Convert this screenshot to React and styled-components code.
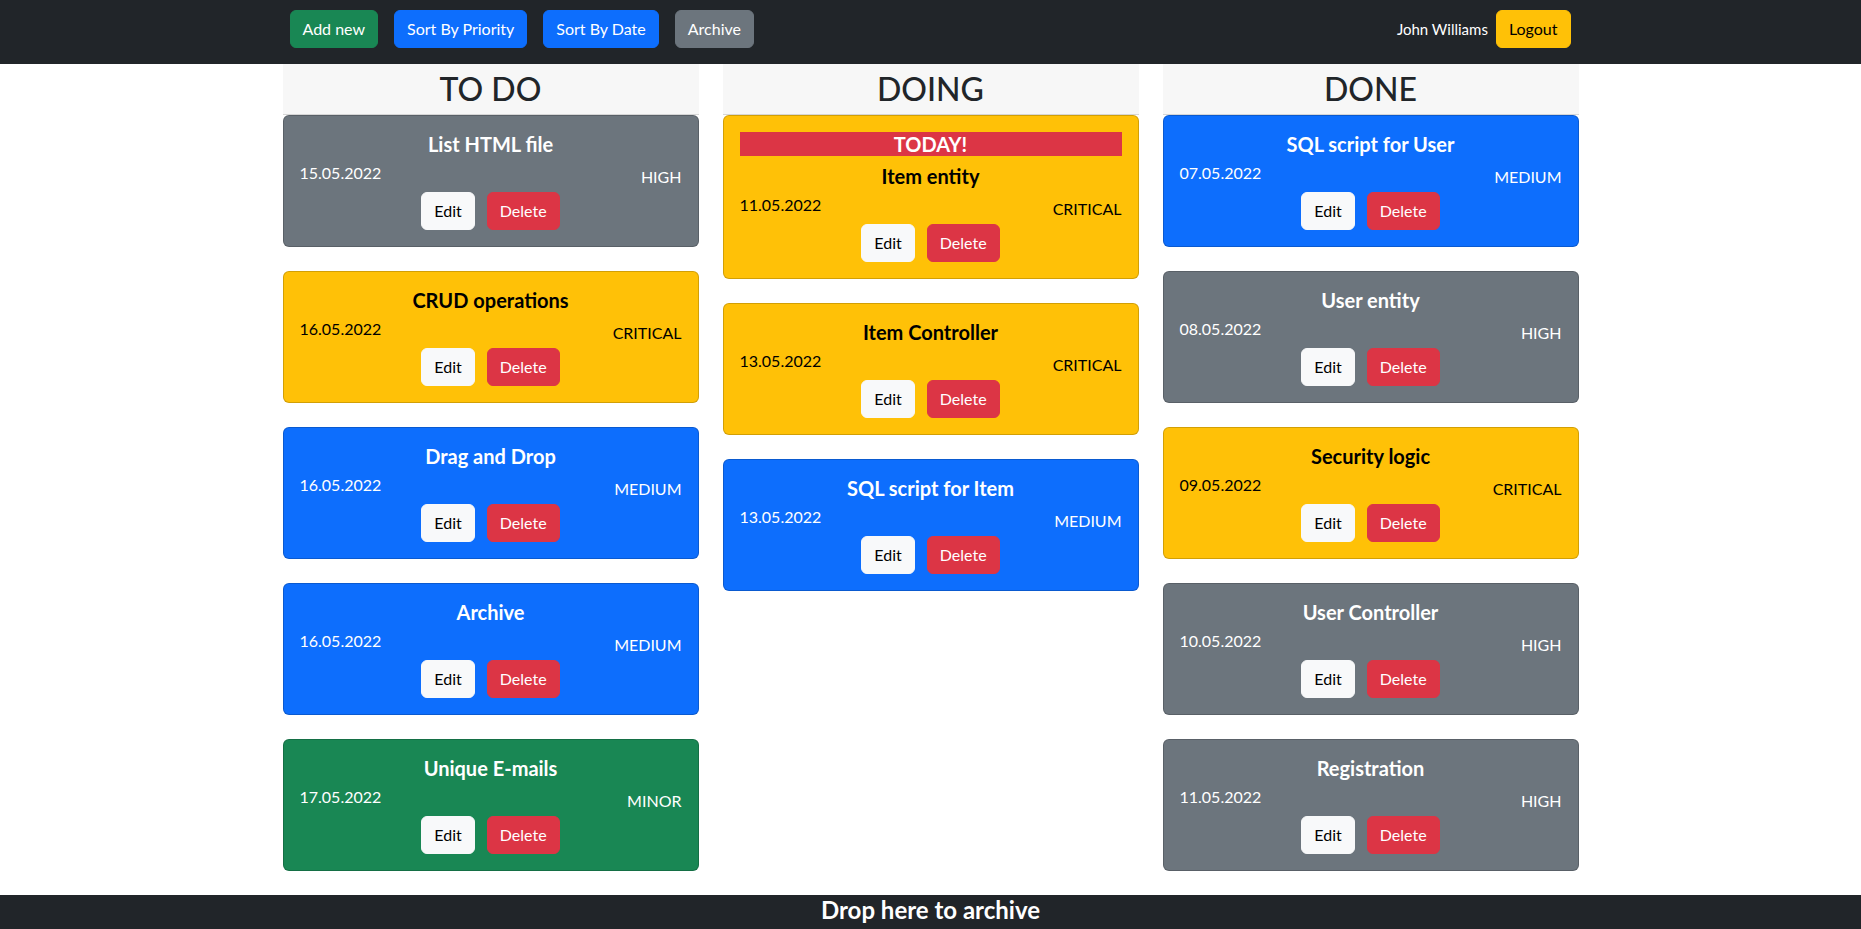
import React from 'react';
import styled, { createGlobalStyle } from 'styled-components';

const colors = {
  primary: '#0d6efd',
  secondary: '#6c757d',
  success: '#198754',
  warning: '#ffc107',
  danger: '#dc3545',
  light: '#f8f9fa',
  dark: '#212529',
};

const columns = [
  {
    title: 'TO DO',
    items: [
      { name: 'List HTML file', date: '15.05.2022', priority: 'HIGH', tone: 'secondary' },
      { name: 'CRUD operations', date: '16.05.2022', priority: 'CRITICAL', tone: 'warning' },
      { name: 'Drag and Drop', date: '16.05.2022', priority: 'MEDIUM', tone: 'primary' },
      { name: 'Archive', date: '16.05.2022', priority: 'MEDIUM', tone: 'primary' },
      { name: 'Unique E-mails', date: '17.05.2022', priority: 'MINOR', tone: 'success' },
    ],
  },
  {
    title: 'DOING',
    items: [
      { name: 'Item entity', date: '11.05.2022', priority: 'CRITICAL', tone: 'warning', today: true },
      { name: 'Item Controller', date: '13.05.2022', priority: 'CRITICAL', tone: 'warning' },
      { name: 'SQL script for Item', date: '13.05.2022', priority: 'MEDIUM', tone: 'primary' },
    ],
  },
  {
    title: 'DONE',
    items: [
      { name: 'SQL script for User', date: '07.05.2022', priority: 'MEDIUM', tone: 'primary' },
      { name: 'User entity', date: '08.05.2022', priority: 'HIGH', tone: 'secondary' },
      { name: 'Security logic', date: '09.05.2022', priority: 'CRITICAL', tone: 'warning' },
      { name: 'User Controller', date: '10.05.2022', priority: 'HIGH', tone: 'secondary' },
      { name: 'Registration', date: '11.05.2022', priority: 'HIGH', tone: 'secondary' },
    ],
  },
];

function App() {
  return (
    <>
      <GlobalStyle />
      <Navbar>
        <NavInner>
          <NavGroup>
            <Button tone="success">Add new</Button>
            <Button tone="primary">Sort By Priority</Button>
            <Button tone="primary">Sort By Date</Button>
            <Button tone="secondary">Archive</Button>
          </NavGroup>
          <UserBox>
            <UserName>John Williams</UserName>
            <Button tone="warning">Logout</Button>
          </UserBox>
        </NavInner>
      </Navbar>

      <Board>
        {columns.map((col) => (
          <Column key={col.title}>
            <ColumnHeader>{col.title}</ColumnHeader>
            {col.items.map((item) => (
              <Card key={item.name} tone={item.tone}>
                {item.today && <Today>TODAY!</Today>}
                <CardTitle>{item.name}</CardTitle>
                <Meta>
                  <span>{item.date}</span>
                  <Priority>{item.priority}</Priority>
                </Meta>
                <Actions>
                  <Button tone="light">Edit</Button>
                  <Button tone="danger">Delete</Button>
                </Actions>
              </Card>
            ))}
          </Column>
        ))}
      </Board>

      <Footer>Drop here to archive</Footer>
    </>
  );
}

const GlobalStyle = createGlobalStyle`
  * { box-sizing: border-box; }
  body {
    margin: 0;
    font-family: Lato, "Open Sans", sans-serif;
    font-size: 16px;
    line-height: 1.5;
    color: ${colors.dark};
    background: #fff;
  }
`;

const Navbar = styled.nav`
  background-color: ${colors.dark};
  height: 64px;
  padding-top: 10px;
`;

const NavInner = styled.div`
  max-width: 1320px;
  margin: 0 auto;
  padding: 0 20px 0 19px;
  display: flex;
  justify-content: space-between;
  align-items: flex-start;
`;

const NavGroup = styled.div`
  display: flex;
  gap: 16px;
`;

const UserBox = styled.div`
  display: flex;
  align-items: center;
  gap: 8px;
`;

const UserName = styled.span`
  color: #fff;
  font-size: 15px;
`;

const Button = styled.button`
  font-family: inherit;
  font-size: 16px;
  line-height: 24px;
  padding: 6px 12px;
  border-radius: 6px;
  border: 1px solid ${({ tone }) => colors[tone]};
  background-color: ${({ tone }) => colors[tone]};
  color: ${({ tone }) => (tone === 'light' || tone === 'warning' ? '#000' : '#fff')};
  cursor: pointer;
`;

const Board = styled.main`
  max-width: 1320px;
  margin: 0 auto;
  padding: 0 12px;
  display: grid;
  grid-template-columns: repeat(3, 1fr);
  gap: 24px;
  align-items: start;
`;

const Column = styled.section`
  display: flex;
  flex-direction: column;
`;

const ColumnHeader = styled.h2`
  margin: 0;
  height: 51px;
  background-color: #f7f7f7;
  border-bottom: 1px solid #d6d6d6;
  font-size: 32px;
  font-weight: 500;
  line-height: 50px;
  text-align: center;
  color: ${colors.dark};
`;

const Card = styled.div`
  margin-bottom: 24px;
  padding: 16px;
  border: 1px solid rgba(0, 0, 0, 0.175);
  border-radius: 6px;
  background-color: ${({ tone }) => colors[tone]};
  color: ${({ tone }) => (tone === 'warning' ? '#000' : '#fff')};
`;

const Today = styled.div`
  background-color: ${colors.danger};
  color: #fff;
  font-size: 20px;
  font-weight: 700;
  line-height: 24px;
  text-align: center;
  margin-bottom: 8px;
`;

const CardTitle = styled.h5`
  margin: 0 0 5px;
  font-size: 20px;
  font-weight: 700;
  line-height: 24px;
  text-align: center;
`;

const Meta = styled.div`
  display: flex;
  justify-content: space-between;
  align-items: flex-start;
  height: 28px;
  margin-bottom: 3px;
`;

const Priority = styled.span`
  padding-top: 4px;
`;

const Actions = styled.div`
  display: flex;
  justify-content: center;
  gap: 12px;
`;

const Footer = styled.footer`
  background-color: ${colors.dark};
  color: #fff;
  font-size: 24px;
  font-weight: 700;
  line-height: 29px;
  text-align: center;
  padding: 0 0 8px;
`;

export default App;
